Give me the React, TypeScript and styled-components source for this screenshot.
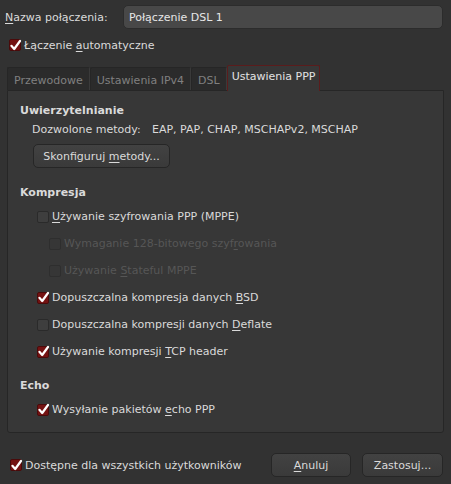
import styled, { createGlobalStyle } from "styled-components";

const GlobalStyle = createGlobalStyle`
  html, body {
    margin: 0;
    padding: 0;
    background: #323232;
  }
  body {
    font-family: "DejaVu Sans", "Liberation Sans", sans-serif;
    font-size: 11px;
    color: #dadada;
  }
`;

const Window = styled.div`
  width: 451px;
  height: 484px;
  background: #323232;
  display: flex;
  flex-direction: column;
  overflow: hidden;
`;

const NameRow = styled.div`
  display: flex;
  align-items: center;
  padding: 5px 8px 0 5px;
`;

const NameLabel = styled.span`
  width: 118px;
`;

const Entry = styled.div`
  flex: 1;
  height: 22px;
  display: flex;
  align-items: center;
  padding-left: 5px;
  background: #484848;
  border: 1px solid #2c2c2c;
  border-radius: 5px;
  color: #e6e6e6;
`;

const U = styled.span`
  text-decoration: underline;
  text-underline-offset: 2px;
`;

const CheckRow = styled.label<{ $indent: number; $height: number; $disabled?: boolean }>`
  display: flex;
  align-items: center;
  gap: 3px;
  height: ${(p) => p.$height}px;
  padding-left: ${(p) => p.$indent}px;
  color: ${(p) => (p.$disabled ? "#565656" : "#dadada")};
`;

const Box = styled.span<{ $checked?: boolean; $disabled?: boolean }>`
  width: 12px;
  height: 12px;
  box-sizing: border-box;
  border-radius: 2px;
  display: flex;
  align-items: center;
  justify-content: center;
  background: ${(p) => (p.$checked ? "#741212" : p.$disabled ? "#363636" : "#3e3e3e")};
  border: 1px solid ${(p) => (p.$checked ? "#4a0a0a" : p.$disabled ? "#2e2e2e" : "#2a2a2a")};
`;

const TabBar = styled.div`
  display: flex;
  align-items: flex-end;
  margin-top: 8px;
  padding-left: 7px;
  height: 26px;
`;

const Tab = styled.div<{ $active?: boolean }>`
  height: ${(p) => (p.$active ? 26 : 23)}px;
  box-sizing: border-box;
  padding: ${(p) => (p.$active ? "4px 4px 0 4px" : "2px 6px 0 6px")};
  display: flex;
  align-items: ${(p) => (p.$active ? "flex-start" : "center")};
  background: ${(p) => (p.$active ? "#373737" : "#2b2b2b")};
  color: ${(p) => (p.$active ? "#e2e2e2" : "#808080")};
  border: 1px solid ${(p) => (p.$active ? "#5a1c1c" : "#262626")};
  border-bottom: none;
  border-right: ${(p) => (p.$active ? "1px solid #5a1c1c" : "1px solid #3a3a3a")};
  margin-bottom: ${(p) => (p.$active ? -1 : 0)}px;
  position: relative;
  z-index: ${(p) => (p.$active ? 1 : 0)};
  border-radius: 2px 2px 0 0;
`;

const Panel = styled.div`
  margin: 0 7px;
  height: 343px;
  box-sizing: border-box;
  background: #373737;
  border: 1px solid #262626;
  border-radius: 0 0 3px 3px;
  padding-top: 12px;
`;

const Heading = styled.div<{ $top: number }>`
  font-weight: bold;
  height: 16px;
  line-height: 16px;
  margin-top: ${(p) => p.$top}px;
  padding-left: 12px;
`;

const MethodsRow = styled.div`
  display: flex;
  height: 16px;
  line-height: 16px;
  margin-top: 3px;
  padding-left: 24px;
`;

const MethodsLabel = styled.span`
  width: 120px;
`;

const Button = styled.div<{ $width: number }>`
  width: ${(p) => p.$width}px;
  height: 24px;
  box-sizing: border-box;
  display: flex;
  align-items: center;
  justify-content: center;
  background: linear-gradient(#424242, #3a3a3a);
  border: 1px solid #262626;
  border-radius: 5px;
  color: #dadada;
`;

const ButtonWrap = styled.div`
  margin-top: 6px;
  padding-left: 25px;
`;

const List = styled.div<{ $top: number }>`
  margin-top: ${(p) => p.$top}px;
`;

const Footer = styled.div`
  display: flex;
  align-items: center;
  margin-top: 20px;
  padding-right: 8px;
`;

const Spacer = styled.div`
  flex: 1;
`;

const Buttons = styled.div`
  display: flex;
  gap: 11px;
`;

const Check = () => (
  <svg width="11" height="11" viewBox="0 0 11 11" style={{ overflow: "visible" }}>
    <path
      d="M1.4 5.8 L4.2 9 L10 1"
      fill="none"
      stroke="#ffffff"
      strokeWidth="2.2"
      strokeLinecap="round"
      strokeLinejoin="round"
    />
  </svg>
);

type ItemProps = {
  checked?: boolean;
  disabled?: boolean;
  indent: number;
  height?: number;
  children: React.ReactNode;
};

const Item = ({ checked, disabled, indent, height = 27, children }: ItemProps) => (
  <CheckRow $indent={indent} $height={height} $disabled={disabled}>
    <Box $checked={checked} $disabled={disabled}>
      {checked && <Check />}
    </Box>
    <span>{children}</span>
  </CheckRow>
);

const App = () => {
  return (
    <Window>
      <GlobalStyle />
      <NameRow>
        <NameLabel>
          <U>N</U>azwa połączenia:
        </NameLabel>
        <Entry>Połączenie DSL 1</Entry>
      </NameRow>
      <div style={{ marginTop: 5 }}>
        <Item checked indent={9} height={22}>
          Łączenie <U>a</U>utomatyczne
        </Item>
      </div>
      <TabBar>
        <Tab>Przewodowe</Tab>
        <Tab>Ustawienia IPv4</Tab>
        <Tab>DSL</Tab>
        <Tab $active>Ustawienia PPP</Tab>
      </TabBar>
      <Panel>
        <Heading $top={0}>Uwierzytelnianie</Heading>
        <MethodsRow>
          <MethodsLabel>Dozwolone metody:</MethodsLabel>
          <span>EAP, PAP, CHAP, MSCHAPv2, MSCHAP</span>
        </MethodsRow>
        <ButtonWrap>
          <Button $width={137}>
            Skonfiguruj&nbsp;<U>m</U>etody...
          </Button>
        </ButtonWrap>
        <Heading $top={17}>Kompresja</Heading>
        <List $top={2}>
          <Item indent={29}>
            <U>U</U>żywanie szyfrowania PPP (MPPE)
          </Item>
          <Item disabled indent={41}>
            Wymaganie 128-bitowego szyf<U>r</U>owania
          </Item>
          <Item disabled indent={41}>
            Używanie <U>S</U>tateful MPPE
          </Item>
          <Item checked indent={29}>
            Dopuszczalna kompresja danych <U>B</U>SD
          </Item>
          <Item indent={29}>
            Dopuszczalna kompresji danych <U>D</U>eflate
          </Item>
          <Item checked indent={29}>
            Używanie kompresji <U>T</U>CP header
          </Item>
        </List>
        <Heading $top={13}>Echo</Heading>
        <List $top={2}>
          <Item checked indent={29}>
            Wysyłanie pakietów <U>e</U>cho PPP
          </Item>
        </List>
      </Panel>
      <Footer>
        <Item checked indent={10} height={23}>
          Dostępne dla wszystkich użytkowników
        </Item>
        <Spacer />
        <Buttons>
          <Button $width={80}>
            <U>A</U>nuluj
          </Button>
          <Button $width={81}>Zastosuj...</Button>
        </Buttons>
      </Footer>
    </Window>
  );
};

export default App;
